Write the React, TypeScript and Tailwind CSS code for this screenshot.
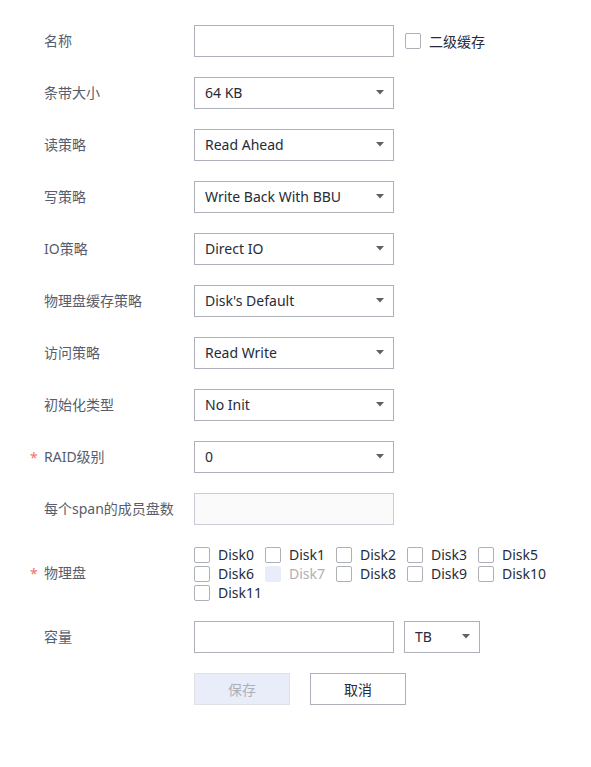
import React from "react";

const font = { fontFamily: '"Noto Sans", "Noto Sans CJK SC", sans-serif' };

const Arrow = () => (
  <svg width="8" height="5" viewBox="0 0 8 5" className="shrink-0">
    <path d="M0 0 H8 L4 4.5 Z" fill="#5e616a" />
  </svg>
);

const Select = ({ value, w = "w-[200px]" }: { value: string; w?: string }) => (
  <div
    className={`${w} h-8 border border-[#adb0b8] bg-white flex items-center justify-between pl-[10px] pr-[9px] pb-[2px] text-[14px] text-[#252b3a]`}
  >
    <span>{value}</span>
    <Arrow />
  </div>
);

const Input = ({ disabled = false }: { disabled?: boolean }) => (
  <div
    className={
      disabled
        ? "w-[200px] h-8 border border-[#c9ccd6] bg-[#fafafa]"
        : "w-[200px] h-8 border border-[#adb0b8] bg-white"
    }
  />
);

const Box = ({ disabled = false }: { disabled?: boolean }) => (
  <span
    className={
      disabled
        ? "w-4 h-4 rounded-[2px] bg-[#e9edfa] shrink-0"
        : "w-4 h-4 rounded-[2px] border border-[#adb0b8] bg-white shrink-0"
    }
  />
);

const Row = ({
  label,
  required = false,
  children,
  tall = false,
}: {
  label: string;
  required?: boolean;
  children: React.ReactNode;
  tall?: boolean;
}) => (
  <div className={`flex items-center ${tall ? "" : "h-8"}`}>
    <div className="w-[194px] shrink-0 flex items-center pl-[30px] pb-[2px] text-[14px] text-[#575d6c]">
      <span className="w-[14px] text-[#f66f6a] text-[14px] leading-none pt-[3px]">
        {required ? "*" : ""}
      </span>
      <span>{label}</span>
    </div>
    {children}
  </div>
);

const disks = [
  "Disk0", "Disk1", "Disk2", "Disk3", "Disk5",
  "Disk6", "Disk7", "Disk8", "Disk9", "Disk10",
  "Disk11",
];

export default function App() {
  return (
    <div className="w-[591px] h-[767px] bg-white" style={font}>
      <div className="flex flex-col gap-5 pt-[25px]">
        <Row label="名称">
          <Input />
          <label className="flex items-center ml-[11px] gap-[8px] text-[14px] text-[#252b3a]">
            <Box />
            二级缓存
          </label>
        </Row>
        <Row label="条带大小">
          <Select value="64 KB" />
        </Row>
        <Row label="读策略">
          <Select value="Read Ahead" />
        </Row>
        <Row label="写策略">
          <Select value="Write Back With BBU" />
        </Row>
        <Row label="IO策略">
          <Select value="Direct IO" />
        </Row>
        <Row label="物理盘缓存策略">
          <Select value="Disk's Default" />
        </Row>
        <Row label="访问策略">
          <Select value="Read Write" />
        </Row>
        <Row label="初始化类型">
          <Select value="No Init" />
        </Row>
        <Row label="RAID级别" required>
          <Select value="0" />
        </Row>
        <Row label="每个span的成员盘数">
          <Input disabled />
        </Row>
        <Row label="物理盘" required tall>
          <div className="grid grid-cols-[repeat(5,71px)] gap-y-[3px] pt-[2px]">
            {disks.map((d) => {
              const dis = d === "Disk7";
              return (
                <div key={d} className="flex items-center gap-[8px] h-4 text-[14px] leading-none">
                  <Box disabled={dis} />
                  <span className={dis ? "text-[#adb0b8]" : "text-[#252b3a]"}>{d}</span>
                </div>
              );
            })}
          </div>
        </Row>
        <Row label="容量">
          <Input />
          <div className="ml-[10px]">
            <Select value="TB" w="w-[76px]" />
          </div>
        </Row>
        <div className="flex pl-[194px] gap-5">
          <button className="w-[96px] h-8 border border-[#dfe1e6] bg-[#e9edfa] text-[14px] text-[#adb0b8]">
            保存
          </button>
          <button className="w-[96px] h-8 border border-[#adb0b8] bg-white text-[14px] text-[#252b3a]">
            取消
          </button>
        </div>
      </div>
    </div>
  );
}
